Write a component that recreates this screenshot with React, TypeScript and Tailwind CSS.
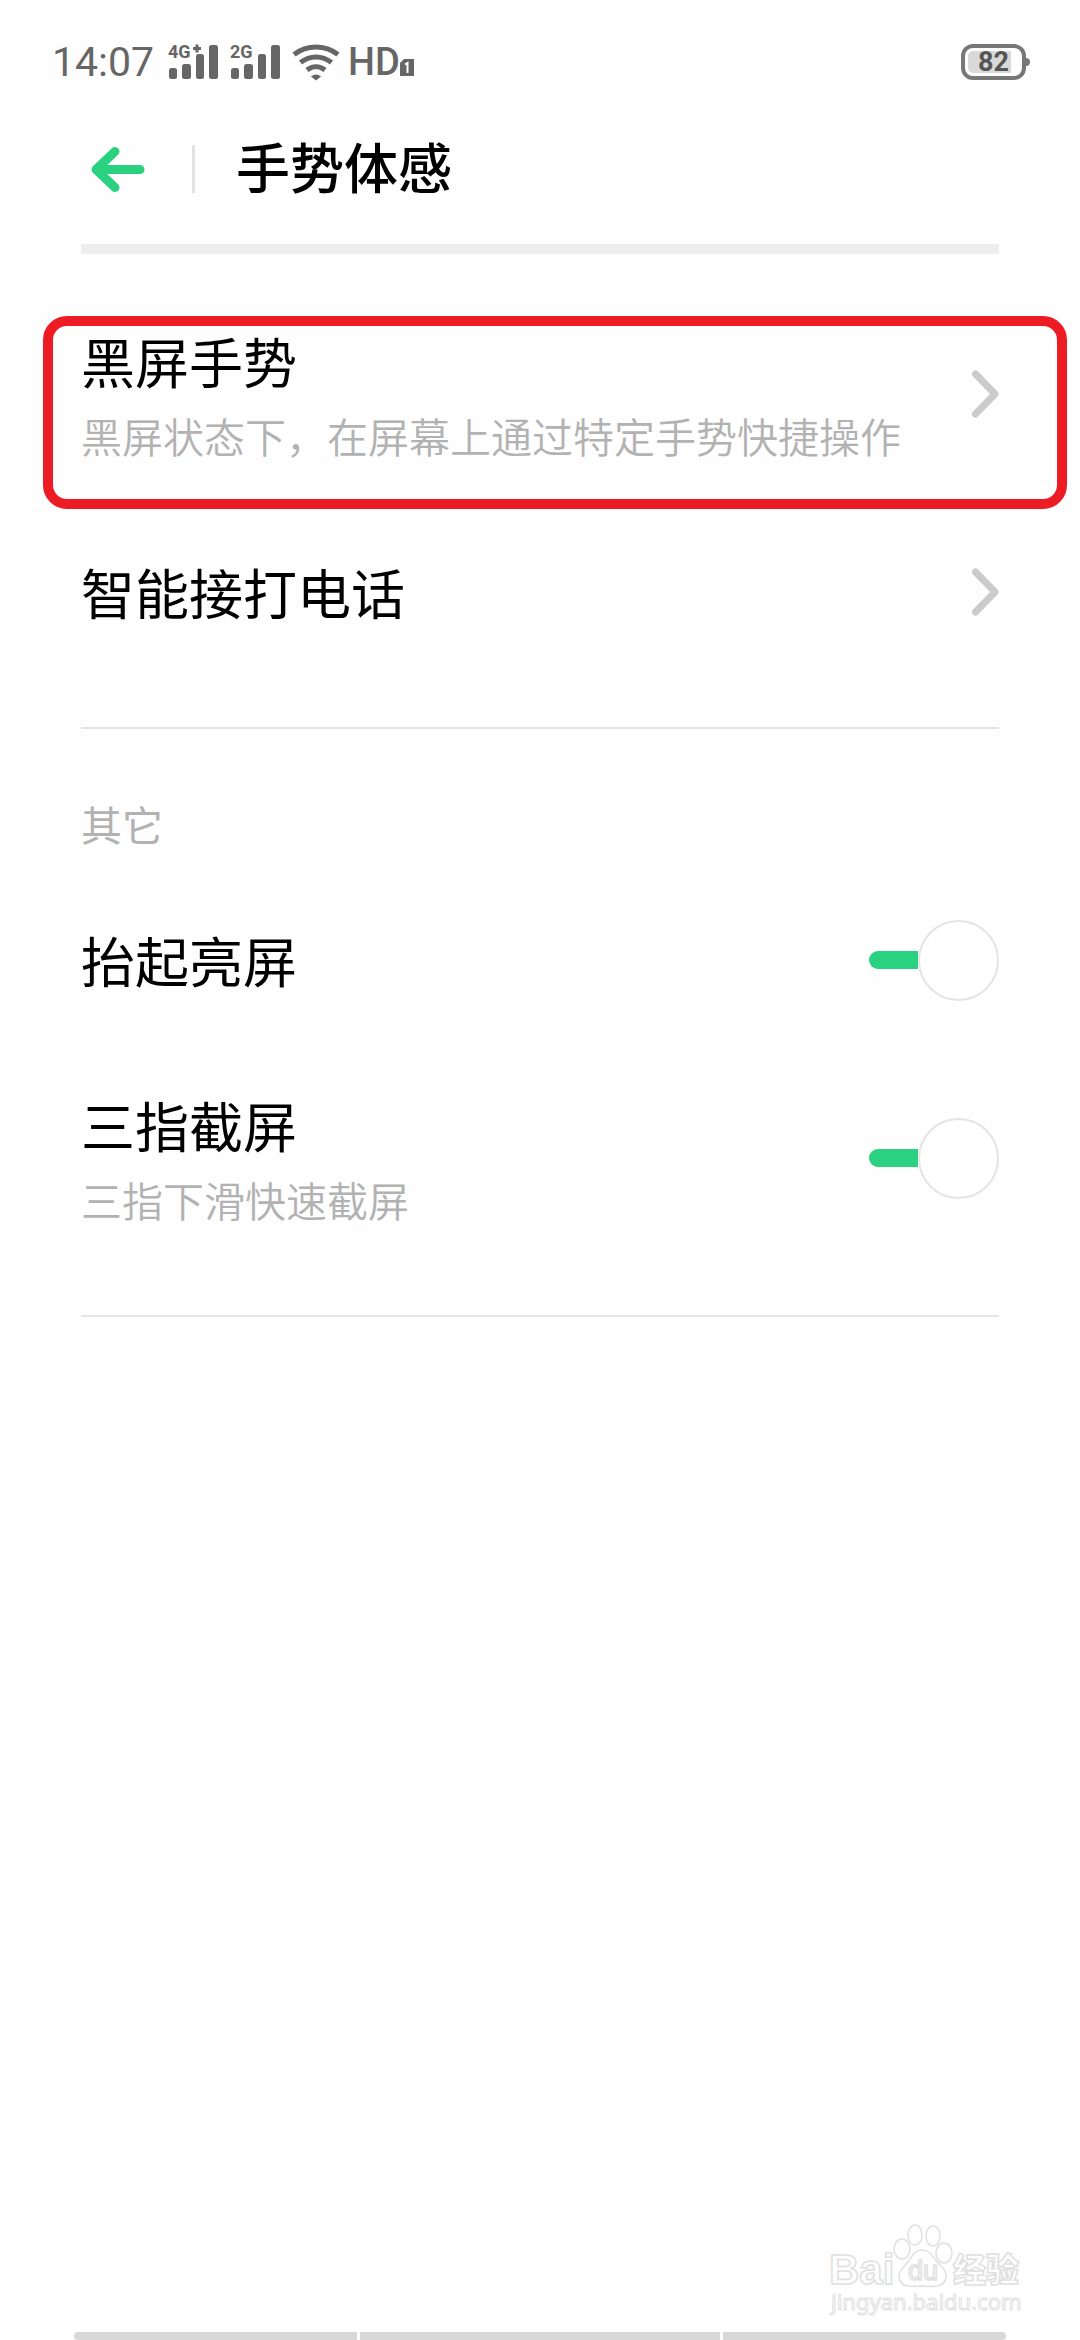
import React, { useState } from 'react';

const ChevronIcon = () => (
  <svg className="w-7 h-12 shrink-0" viewBox="0 0 28 48" fill="none" stroke="#cbcbcb" strokeWidth="7" strokeLinecap="round" strokeLinejoin="round">
    <path d="M4.500 4L24 24L4.500 44" />
  </svg>
);

// Four bars that grow to the right, the network label sits over the first ones
const SignalIcon = ({ label, plus }: { label: string; plus?: boolean }) => (
  <svg className="w-[52px] h-9 overflow-visible" viewBox="0 0 52 36" fill="#666666">
    <rect x="1" y="24" width="8" height="11" rx="2.500" />
    <rect x="14" y="20" width="9" height="15" rx="2.500" />
    <rect x="28" y="10" width="8" height="25" rx="2.500" />
    <rect x="41" y="1" width="9" height="34" rx="2.500" />
    <text x="0" y="14" fontSize="18" fontWeight="700" fontFamily="Roboto, sans-serif">{label}</text>
    {plus && <path d="M29 0.500v8M25 4.500h8" stroke="#666666" strokeWidth="3" />}
  </svg>
);

const WifiIcon = () => (
  <svg className="w-12 h-[37px]" viewBox="0 0 48 37" fill="none" stroke="#666666" strokeWidth="5">
    <path d="M2 10.500C15 0.500 33 0.500 46 10.500" />
    <path d="M8.500 18.500C18 11 30 11 39.500 18.500" />
    <path d="M15 26C20.500 21.500 27.500 21.500 33 26" />
    <path d="M24 36.500L19 32.500Q24 28.500 29 32.500Z" fill="#666666" stroke="none" />
  </svg>
);

const StatusBar = () => (
  <div className="flex items-center h-[124px] pl-[52px] pr-[50px] font-[Roboto,sans-serif] text-[#666666]">
    <span className="text-[41px] leading-12">14:07</span>
    <div className="flex items-center gap-[10px] ml-[14px]">
      <SignalIcon label="4G" plus />
      <SignalIcon label="2G" />
      <WifiIcon />
    </div>
    <div className="flex items-center ml-2">
      <span className="text-[38px] leading-10 font-medium">HD</span>
      <svg className="w-[14px] h-[17px] self-end mb-[6px]" viewBox="0 0 14 17">
        <path d="M4 0H14V17H0V4Z" fill="#666666" />
        <path d="M5 5.500L7.500 4V14" fill="none" stroke="#fefefe" strokeWidth="2" />
      </svg>
    </div>
    <div className="flex items-center ml-auto">
      <div className="flex items-center justify-center w-[65px] h-9 rounded-xl border-4 border-[#777777] bg-linear-to-r from-[#d9d9d9] from-80% to-[#fefefe] to-80% bg-clip-content p-[3px]">
        <span className="text-[27px] leading-7 font-bold text-[#555555]">82</span>
      </div>
      <span className="w-1 h-2 rounded-r-full bg-[#777777]" />
    </div>
  </div>
);

interface RowTextProps {
  title: string;
  desc?: string;
}

const RowText = ({ title, desc }: RowTextProps) => (
  <span className="flex flex-col gap-[18px] text-left">
    <span className="text-[54px] leading-16 text-black">{title}</span>
    {desc && <span className="text-[41px] leading-12 font-[350] text-[#b2b2b2]">{desc}</span>}
  </span>
);

const LinkRow = ({ title, desc }: RowTextProps) => (
  <button type="button" className="flex items-center justify-between w-full h-[198px]">
    <RowText title={title} desc={desc} />
    <ChevronIcon />
  </button>
);

const SwitchRow = ({ title, desc }: RowTextProps) => {
  const [on, setOn] = useState(true);

  return (
    <label className="flex items-center justify-between h-[198px]">
      <RowText title={title} desc={desc} />
      <input type="checkbox" role="switch" className="peer sr-only" checked={on} onChange={() => setOn(!on)} />
      <span className="flex items-center w-[130px] shrink-0 flex-row-reverse peer-not-checked:flex-row">
        <span className="size-[81px] rounded-full border-2 border-[#e4e4e4] bg-white" />
        <span className={`h-[18px] flex-1 ${on ? 'rounded-l-full bg-[#2ad181]' : 'rounded-r-full bg-[#e4e4e4]'}`} />
      </span>
    </label>
  );
};

const Watermark = () => (
  <svg className="w-[200px] h-24" viewBox="0 0 200 96" fill="#fefefe" stroke="#e0e0e0" strokeWidth="1.500">
    <text x="1" y="60" fontSize="42" fontWeight="700" fontFamily="'Liberation Sans', sans-serif">Bai</text>
    <text x="125" y="58" fontSize="33" fontWeight="900" fontFamily="'Noto Sans CJK SC', sans-serif">经验</text>
    <ellipse cx="74" cy="25" rx="8" ry="10" />
    <ellipse cx="87" cy="11" rx="7" ry="10" />
    <ellipse cx="105" cy="12" rx="7" ry="10" />
    <ellipse cx="116" cy="29" rx="8" ry="10" />
    <path d="M94 26C103 26 105 34 111 40C118 46 119 50 118 54C116 63 107 63 94 62C81 63 73 63 71 54C70 47 75 44 80 38C84 33 86 26 94 26Z" />
    <text x="80" y="56" fontSize="27" fontFamily="'Liberation Sans', sans-serif">du</text>
    <text x="3" y="86" fontSize="22" strokeWidth="1" fontFamily="'Noto Sans', sans-serif">jingyan.baidu.com</text>
  </svg>
);

const App: React.FC = () => {
  return (
    <div className="flex flex-col min-h-screen bg-[#fefefe] font-['Noto_Sans_CJK_SC',sans-serif]">
      <StatusBar />

      <header className="px-[81px]">
        <div className="flex items-center h-[90px] pl-2">
          <button type="button" aria-label="返回">
            <svg className="w-[56px] h-12" viewBox="0 0 56 48" fill="none" stroke="#2ad181" strokeWidth="9" strokeLinecap="round" strokeLinejoin="round">
              <path d="M26 6.500L7 24.500L26 42.500M8 24.500H51" />
              <path d="M13 20V29L8 24.500Z" strokeWidth="4" fill="#2ad181" />
            </svg>
          </button>
          <span className="w-[3px] h-12 ml-[47px] bg-[#e2e2e2]" />
          <h1 className="ml-[41px] pb-1.5 text-[54px] leading-16 font-medium text-black">手势体感</h1>
        </div>
        <div className="h-[10px] mt-[30px] bg-[#eeeeee]" />
      </header>

      <main className="px-[81px] pt-[41px]">
        <section className="pb-9 border-b-2 border-[#e5e5e5]">
          <div className="relative">
            <LinkRow title="黑屏手势" desc="黑屏状态下，在屏幕上通过特定手势快捷操作" />
            {/* highlight frame */}
            <div className="absolute top-[21px] -bottom-4 -left-[38px] -right-[68px] rounded-3xl border-10 border-[#ed1c24] pointer-events-none" />
          </div>
          <LinkRow title="智能接打电话" />
        </section>

        <section className="pt-[70px] pb-[58px] border-b-2 border-[#e5e5e5]">
          <h2 className="mb-3.5 text-[41px] leading-12 text-[#b2b2b2]">其它</h2>
          <SwitchRow title="抬起亮屏" />
          <SwitchRow title="三指截屏" desc="三指下滑快速截屏" />
        </section>
      </main>

      <footer className="flex flex-col mt-auto px-[74px]">
        <div className="self-end -mr-[22px] mb-3">
          <Watermark />
        </div>
        <div className="flex gap-[3px]">
          <span className="h-2 flex-[283] rounded-l-full bg-[#d8d8d8]" />
          <span className="h-2 flex-[361] bg-[#d8d8d8]" />
          <span className="h-2 flex-[283] rounded-r-full bg-[#d8d8d8]" />
        </div>
      </footer>
    </div>
  );
};

export default App;
